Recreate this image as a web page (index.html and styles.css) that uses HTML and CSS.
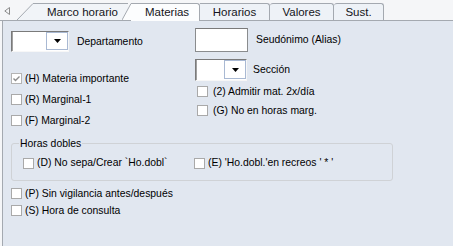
FILE: index.html
```html
<!DOCTYPE html>
<html lang="es">
<head>
    <meta charset="UTF-8">
    <title>Materias</title>
    <link rel="stylesheet" href="styles.css">
</head>
<body>
    <!-- Tab strip -->
    <div class="tab-strip">
        <svg class="scroll-arrow" width="6" height="8" viewBox="0 0 6 8"><path d="M5.5 0.5 L0.8 4 L5.5 7.5 Z" fill="none" stroke="#8c8c8c"/></svg>
        <svg class="tab-edge edge-wide" width="16" height="17" viewBox="0 0 16 17"><polygon points="0,17 16,0.5 16,17" fill="#f1f4f8"/><line x1="0" y1="17" x2="16" y2="0.5" stroke="#a4a9b0"/></svg>
        <div class="tab tab-first">Marco horario</div>
        <svg class="tab-edge edge-narrow" width="9" height="17" viewBox="0 0 9 17"><polygon points="0,17 9,0.5 9,17" fill="#fcfdfe"/><line x1="0" y1="17" x2="9" y2="0.5" stroke="#a4a9b0"/></svg>
        <div class="tab tab-active">Materias</div>
        <div class="tab tab-horarios">Horarios</div>
        <div class="tab tab-valores">Valores</div>
        <div class="tab tab-sust">Sust.</div>
    </div>

    <!-- Panel -->
    <div class="panel">
        <div class="fields">
            <!-- Left column -->
            <div class="col-left">
                <div class="field-row dep-row">
                    <div class="combo combo-dep">
                        <span class="combo-field"></span>
                        <span class="combo-btn"><svg width="7" height="4" viewBox="0 0 7 4"><polygon points="0,0 7,0 3.5,4" fill="#000"/></svg></span>
                    </div>
                    <span class="label">Departamento</span>
                </div>
                <div class="checks checks-left">
                    <label class="check">
                        <span class="box box-checked"><svg width="9" height="9" viewBox="0 0 9 9"><polyline points="1.5,4.5 3.5,6.5 7.5,2.5" fill="none" stroke="#8d8d8d" stroke-width="1.4"/></svg></span>
                        (H) Materia importante
                    </label>
                    <label class="check"><span class="box"></span>(R) Marginal-1</label>
                    <label class="check"><span class="box"></span>(F) Marginal-2</label>
                </div>
            </div>

            <!-- Right column -->
            <div class="col-right">
                <div class="field-row alias-row">
                    <span class="textbox"></span>
                    <span class="label">Seudónimo (Alias)</span>
                </div>
                <div class="field-row sec-row">
                    <div class="combo combo-sec">
                        <span class="combo-field"></span>
                        <span class="combo-btn"><svg width="7" height="4" viewBox="0 0 7 4"><polygon points="0,0 7,0 3.5,4" fill="#000"/></svg></span>
                    </div>
                    <span class="label">Sección</span>
                </div>
                <div class="checks checks-right">
                    <label class="check"><span class="box"></span>(2) Admitir mat. 2x/día</label>
                    <label class="check"><span class="box"></span>(G) No en horas marg.</label>
                </div>
            </div>
        </div>

        <!-- Horas dobles group -->
        <div class="group">
            <span class="group-title">Horas dobles</span>
            <label class="check"><span class="box"></span>(D) No sepa/Crear `Ho.dobl`</label>
            <label class="check"><span class="box"></span>(E) 'Ho.dobl.'en recreos ' * '</label>
        </div>

        <div class="checks checks-bottom">
            <label class="check"><span class="box"></span>(P) Sin vigilancia antes/después</label>
            <label class="check"><span class="box"></span>(S) Hora de consulta</label>
        </div>
    </div>
</body>
</html>
```

FILE: styles.css
```css
/* Base */
* {
    margin: 0;
    padding: 0;
    box-sizing: border-box;
}

body {
    width: 453px;
    height: 246px;
    overflow: hidden;
    background: #f5f6f8;
    font-family: "Liberation Sans", Arial, sans-serif;
    font-size: 10.4px;
    color: #000;
}

/* Tab strip */
.tab-strip {
    display: flex;
    align-items: flex-end;
    height: 21px;
    border-bottom: 1px solid #a4a9b0;
}

.scroll-arrow {
    align-self: center;
    margin-left: 4px;
    margin-top: 1px;
}

.tab-edge {
    flex: none;
    position: relative;
}

.edge-wide {
    margin-left: 7px;
}

.edge-narrow {
    margin-left: -6px;
    z-index: 2;
}

.tab {
    flex: none;
    height: 17px;
    font-size: 11.5px;
    line-height: 16px;
    color: #141420;
    background: #eef2f7;
    border-top: 1px solid #a4a9b0;
    border-right: 1px solid #a4a9b0;
    border-radius: 0 3px 0 0;
    text-align: center;
}

.tab-first {
    width: 95px;
    padding-left: 14px;
    text-align: left;
    background: #f1f4f8;
    border-right: none;
    border-radius: 0;
}

.tab-active {
    position: relative;
    z-index: 2;
    width: 69px;
    height: 18px;
    margin-bottom: -1px;
    padding-left: 14px;
    text-align: left;
    background: #fcfdfe;
}

.tab-horarios {
    width: 70px;
}

.tab-valores {
    width: 64px;
    border-radius: 3px 3px 0 0;
}

.tab-sust {
    width: 50px;
    border-radius: 3px 3px 0 0;
}

/* Panel */
.panel {
    margin-left: 2px;
    height: 225px;
    padding-left: 8px;
    background: #e1e7f0;
    border-left: 1px solid #a4a9b0;
}

.fields {
    display: grid;
    grid-template-columns: 184px 1fr;
    height: 110px;
}

.field-row {
    display: flex;
    align-items: center;
}

.label {
    line-height: 14px;
}

.dep-row {
    margin-top: 10px;
    gap: 8px;
}

.alias-row {
    margin-top: 7px;
    gap: 8px;
}

.sec-row {
    margin-top: 7px;
    gap: 6px;
}

/* Inputs */
.textbox {
    width: 53px;
    height: 24px;
    background: #fff;
    border: 1px solid #8a8c8e;
    border-top-color: #7a7a7a;
}

.combo {
    display: flex;
    height: 21px;
    background: #fff;
    border: 1px solid;
    border-color: #7a7a7a #f7f7f7 #f7f7f7 #7a7a7a;
    box-shadow: inset 1px 0 0 #a0a0a0;
}

.combo-dep {
    width: 58px;
}

.combo-sec {
    width: 52px;
    height: 22px;
}

.combo-field {
    flex: 1;
}

.combo-btn {
    display: flex;
    align-items: center;
    justify-content: center;
    width: 22px;
    margin-bottom: 1px;
    border: 1px solid #a9b9d3;
    background: #fff;
}

/* Checkboxes */
.checks {
    display: flex;
    flex-direction: column;
}

.check {
    display: flex;
    align-items: center;
    gap: 3px;
    line-height: 14px;
    white-space: nowrap;
}

.box {
    flex: none;
    display: flex;
    align-items: center;
    justify-content: center;
    width: 11px;
    height: 11px;
    background: #fff;
    border: 1px solid #a9a9a9;
}

.box-checked {
    border-color: #b4b4b4;
}

.checks-left {
    margin-top: 16px;
}

.checks-left .check {
    height: 21px;
}

.checks-right {
    margin-top: 1px;
    padding-left: 2px;
}

.checks-right .check {
    height: 19px;
    gap: 5px;
}

/* Group box */
.group {
    position: relative;
    display: grid;
    grid-template-columns: 171px 1fr;
    width: 382px;
    margin-top: 12px;
    padding: 12px 0 10px 11px;
    border: 1px solid #cfd2d6;
    border-radius: 3px;
}

.group .check {
    height: 14px;
}

.group-title {
    position: absolute;
    top: -7px;
    left: 7px;
    padding: 0 1px;
    line-height: 13px;
    background: #e1e7f0;
}

.checks-bottom {
    margin-top: 4px;
}

.checks-bottom .check {
    height: 17px;
}
```
